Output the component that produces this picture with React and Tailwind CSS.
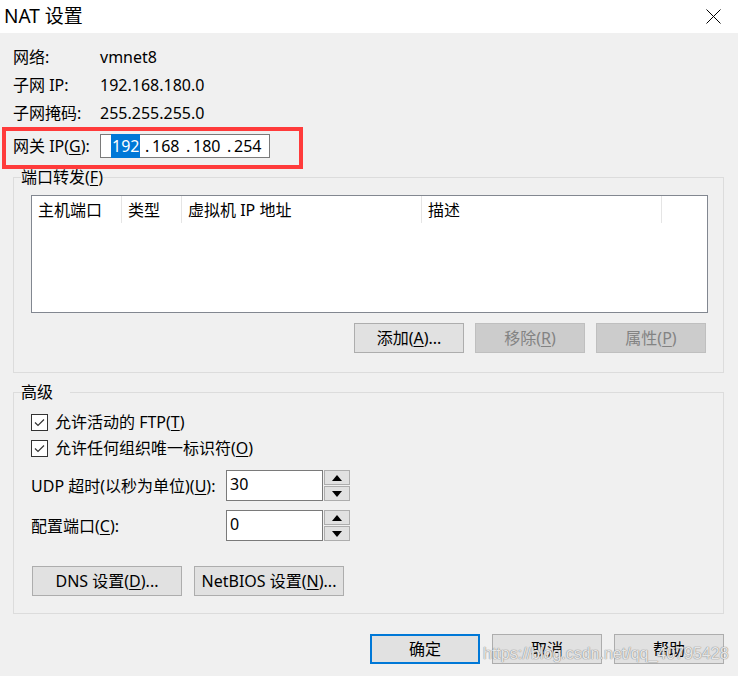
import clsx from 'clsx';

function Btn({ children, w = 'w-[110px]', disabled, primary }) {
  return (
    <button
      type="button"
      className={clsx(
        'h-[30px] text-[16px] leading-none flex items-center justify-center',
        w,
        disabled && 'bg-[#cccccc] border border-[#bfbfbf] text-[#838383]',
        !disabled && 'bg-[#e1e1e1] text-black',
        primary && 'border-2 border-[#0078d7]',
        !disabled && !primary && 'border border-[#adadad]'
      )}
    >
      {children}
    </button>
  );
}

function Arrow({ down }) {
  return (
    <svg width="10" height="6" viewBox="0 0 10 6">
      <path d={down ? 'M0 0 L10 0 L5 6 Z' : 'M0 6 L5 0 L10 6 Z'} fill="#000" />
    </svg>
  );
}

function Spin({ value }) {
  return (
    <div className="flex gap-[1px] h-[31px]">
      <div className="w-[97px] h-full border border-[#7a7a7a] bg-white pl-[3px] pt-[2px] text-[16px] leading-[22px]">
        {value}
      </div>
      <div className="flex flex-col gap-[1px] w-[26px] h-full">
        <div className="flex-1 border border-[#adadad] bg-[#e1e1e1] flex items-center justify-center">
          <Arrow />
        </div>
        <div className="flex-1 border border-[#adadad] bg-[#e1e1e1] flex items-center justify-center">
          <Arrow down />
        </div>
      </div>
    </div>
  );
}

function Check({ children }) {
  return (
    <div className="h-[26px] flex items-center">
      <div className="w-[17px] h-[17px] border border-[#333333] bg-white flex items-center justify-center">
        <svg width="11" height="9" viewBox="0 0 11 9">
          <path d="M1 4.5 L4 7.5 L10 1.5" fill="none" stroke="#333" strokeWidth="1.2" />
        </svg>
      </div>
      <span className="ml-[7px] text-[16px] leading-none">{children}</span>
    </div>
  );
}

export default function App() {
  const info = [
    ['网络:', 'vmnet8'],
    ['子网 IP:', '192.168.180.0'],
    ['子网掩码:', '255.255.255.0'],
  ];

  return (
    <div className="w-[738px] h-[676px] bg-[#f0f0f0] text-black font-['Noto_Sans','Noto_Sans_CJK_SC',sans-serif] relative overflow-hidden">
      {/* title bar */}
      <div className="h-[33px] bg-white flex items-center justify-between pl-[4px] pr-[17px]">
        <span className="text-[19px] leading-none">NAT 设置</span>
        <svg width="15" height="15" viewBox="0 0 15 15">
          <path d="M0.5 0.5 L14.5 14.5 M14.5 0.5 L0.5 14.5" stroke="#000" strokeWidth="1" />
        </svg>
      </div>

      {/* info rows */}
      <div className="pt-[10px]">
        {info.map(([k, v]) => (
          <div key={k} className="h-[28px] flex items-center pl-[13px] text-[16px] leading-none">
            <span className="w-[87px]">{k}</span>
            <span>{v}</span>
          </div>
        ))}
        <div className="ml-[2px] w-[301px] h-[42px] border-[4px] border-[#ff3b3b] flex pl-[7px] pt-[3px]">
          <span className="w-[87px] h-[24px] flex items-center text-[16px] leading-none">
            网关 IP(<u className="underline-offset-2">G</u>):
          </span>
          <div className="w-[170px] h-[24px] border border-[#7a7a7a] bg-white flex items-center pl-[10px] text-[16px] leading-none">
            <span className="w-[34px]">
              <span className="bg-[#0078d7] text-white px-[1px] py-[1px]">192</span>
            </span>
            <span className="w-[7px]">.</span>
            <span className="w-[34px]">168</span>
            <span className="w-[7px]">.</span>
            <span className="w-[34px]">180</span>
            <span className="w-[7px]">.</span>
            <span className="w-[34px]">254</span>
          </div>
        </div>
      </div>

      {/* port forwarding */}
      <fieldset className="mx-[13px] mr-[14px] border border-[#dcdcdc] pb-[19px]">
        <legend className="ml-[7px] text-[16px] leading-[16px]">
          端口转发(<u className="underline-offset-2">F</u>)
        </legend>
        <div className="ml-[17px] mr-[15px] mt-[10px] h-[118px] border border-[#828790] bg-white">
          <div className="flex h-[27px] text-[16px] leading-none">
            <div className="w-[90px] flex items-center pl-[6px] border-r border-[#e5e5e5]">主机端口</div>
            <div className="w-[60px] flex items-center pl-[6px] border-r border-[#e5e5e5]">类型</div>
            <div className="w-[240px] flex items-center pl-[6px] border-r border-[#e5e5e5]">虚拟机 IP 地址</div>
            <div className="w-[240px] flex items-center pl-[6px] border-r border-[#e5e5e5]">描述</div>
          </div>
        </div>
        <div className="flex justify-end gap-[11px] mt-[10px] mr-[17px]">
          <Btn>
            添加(<u className="underline-offset-2">A</u>)...
          </Btn>
          <Btn disabled>
            移除(<u className="underline-offset-2">R</u>)
          </Btn>
          <Btn disabled>
            属性(<u className="underline-offset-2">P</u>)
          </Btn>
        </div>
      </fieldset>

      {/* advanced */}
      <fieldset className="mt-[11px] ml-[13px] mr-[14px] border border-[#dcdcdc] pl-[17px] pb-[17px]">
        <legend className="ml-[7px] -translate-x-[17px] text-[16px] leading-[16px]">高级</legend>
        <div className="mt-[9px]">
          <Check>
            允许活动的 FTP(<u className="underline-offset-2">T</u>)
          </Check>
          <Check>
            允许任何组织唯一标识符(<u className="underline-offset-2">O</u>)
          </Check>
        </div>
        <div className="flex items-center mt-[9px]">
          <span className="w-[195px] text-[16px] leading-none">
            UDP 超时(以秒为单位)(<u className="underline-offset-2">U</u>):
          </span>
          <Spin value="30" />
        </div>
        <div className="flex items-center mt-[9px]">
          <span className="w-[195px] text-[16px] leading-none">
            配置端口(<u className="underline-offset-2">C</u>):
          </span>
          <Spin value="0" />
        </div>
        <div className="flex gap-[12px] mt-[25px] ml-[1px]">
          <Btn w="w-[150px]">
            DNS 设置(<u className="underline-offset-2">D</u>)...
          </Btn>
          <Btn w="w-[150px]">
            NetBIOS 设置(<u className="underline-offset-2">N</u>)...
          </Btn>
        </div>
      </fieldset>

      {/* dialog buttons */}
      <div className="flex justify-end gap-[12px] mt-[20px] mr-[14px]">
        <Btn primary>确定</Btn>
        <Btn>取消</Btn>
        <Btn>帮助</Btn>
      </div>

      {/* watermark */}
      <span className="absolute left-[483px] top-[646px] font-['Liberation_Sans',sans-serif] text-[16px] leading-none text-white/80 [text-shadow:0_0_1px_#808080,0_0_1px_#808080]">
        https://blog.csdn.net/qq_40795428
      </span>
    </div>
  );
}
